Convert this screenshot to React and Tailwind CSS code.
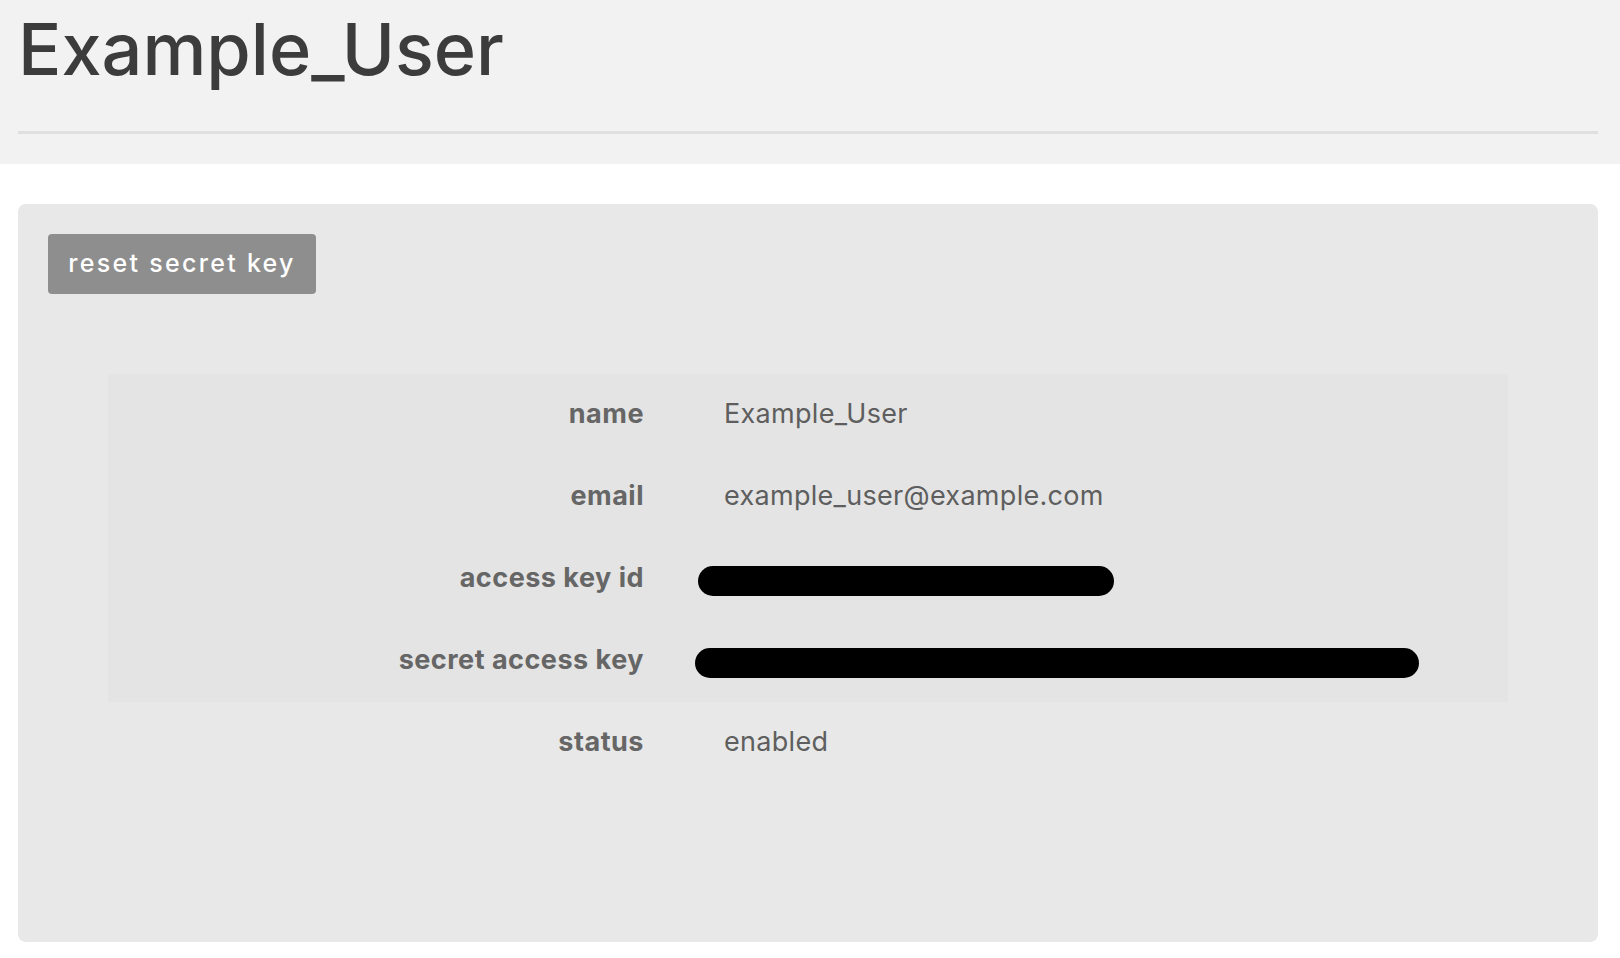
export default function App() {
  const rows = [
    { label: "name", value: "Example_User" },
    { label: "email", value: "example_user@example.com" },
    { label: "access key id", bar: "w-[416px] -ml-[26px]" },
    { label: "secret access key", bar: "w-[724px] -ml-[29px]" },
  ];

  return (
    <div className="min-h-screen bg-white font-['Inter',sans-serif]">
      <header className="h-[164px] bg-[#f2f2f2] pl-[18px] pr-[22px] pt-[5px]">
        <h1 className="text-[72px] font-medium leading-[88px] text-[#3c3c3c]">
          Example_User
        </h1>
        <div className="mt-[38px] h-[3px] bg-[#e0e0e0]" />
      </header>

      <main className="pl-[18px] pr-[22px] pt-[40px]">
        <section className="h-[738px] rounded-lg bg-[#e8e8e8] px-[30px] pt-[30px]">
          <button className="h-[60px] w-[268px] rounded bg-[#8e8e8e] text-[25px] font-medium tracking-[2.3px] text-white">
            reset secret key
          </button>

          <div className="mx-auto mt-[80px] w-[1400px]">
            <div className="bg-[#e4e4e4]">
              {rows.map((row) => (
                <div key={row.label} className="grid h-[82px] grid-cols-[536px_1fr] items-center text-[27px]">
                  <div className="-mt-[1px] text-right font-bold tracking-[0.5px] text-[#666666]">{row.label}</div>
                  <div className="-mt-[1px] pl-[80px] tracking-[0.3px] text-[#5e5e5e]">
                    {row.bar ? (
                      <div className={`mt-[5px] h-[30px] rounded-full bg-black ${row.bar}`} />
                    ) : (
                      row.value
                    )}
                  </div>
                </div>
              ))}
            </div>
            <div className="grid h-[82px] grid-cols-[536px_1fr] items-center text-[27px]">
              <div className="-mt-[1px] text-right font-bold tracking-[0.5px] text-[#666666]">status</div>
              <div className="-mt-[1px] pl-[80px] tracking-[0.3px] text-[#5e5e5e]">enabled</div>
            </div>
          </div>
        </section>
      </main>
    </div>
  );
}
